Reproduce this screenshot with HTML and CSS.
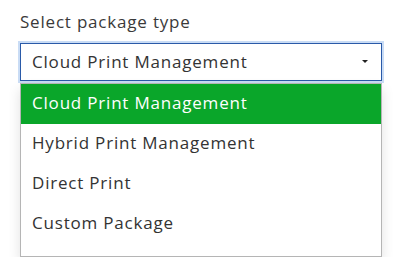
FILE: index.html
```html
<!DOCTYPE html>
<html lang="en">
<head>
    <meta charset="UTF-8">
    <meta name="viewport" content="width=device-width, initial-scale=1.0">
    <title>Select package type</title>
    <link rel="stylesheet" href="styles.css">
</head>
<body>

    <div class="field">
        <label class="label" for="package">Select package type</label>

        <div class="select" id="package">
            <span class="select-value">Cloud Print Management</span>
            <span class="caret"></span>
        </div>

        <ul class="options">
            <li class="option selected">Cloud Print Management</li>
            <li class="option">Hybrid Print Management</li>
            <li class="option">Direct Print</li>
            <li class="option">Custom Package</li>
        </ul>
    </div>

</body>
</html>
```

FILE: styles.css
```css
html, body, div, span, ul, li, label {
    margin: 0;
    padding: 0;
    border: 0;
    font: inherit;
    box-sizing: border-box;
}
ul {
    list-style: none;
}

body {
    background-color: #fff;
    font-family: "Open Sans", sans-serif;
    font-size: 17px;
    letter-spacing: 0.8px;
    color: #333;
    line-height: 1;
}

.field {
    width: 382px;
    padding: 13px 0 0 20px;
}

.label {
    display: block;
    color: #3a3a3a;
    height: 30px;
}

.select {
    height: 38px;
    display: flex;
    align-items: center;
    justify-content: space-between;
    padding: 0 13px 2px 11px;
    border: 1px solid #2a5aa8;
    box-shadow: 0 0 0 2px #c9dcf5;
    color: #333;
}

.caret {
    width: 0;
    height: 0;
    border-left: 3px solid transparent;
    border-right: 3px solid transparent;
    border-top: 3px solid #222;
}

.options {
    margin-top: 2px;
    border: 1px solid #b5b5b5;
    padding-bottom: 12px;
    box-shadow: 0 6px 12px rgba(0, 0, 0, 0.12);
}

.option {
    height: 40px;
    display: flex;
    align-items: center;
    padding: 0 0 3px 11px;
    color: #333;
}

.option.selected {
    background-color: #0aa62a;
    color: #fff;
}
```
